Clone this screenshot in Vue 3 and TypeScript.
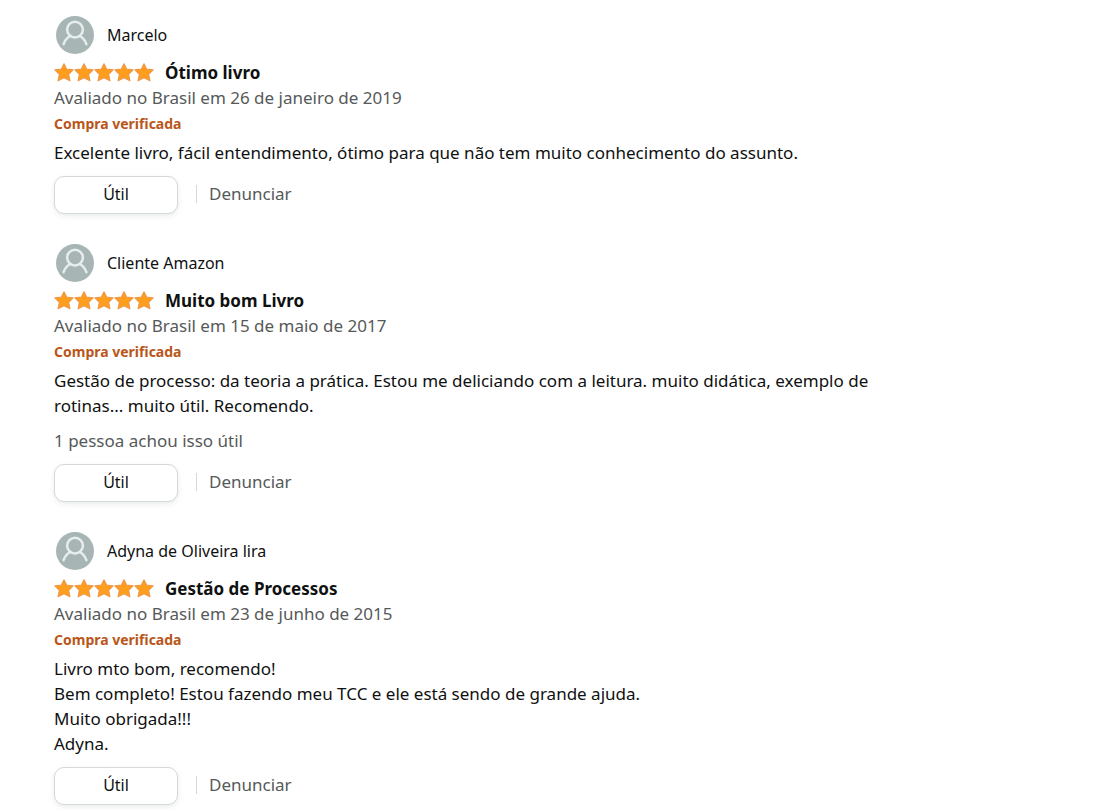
<script setup lang="ts">
interface Review {
  id: number
  author: string
  title: string
  date: string
  body: string[]
  helpful?: string
}

const reviews: Review[] = [
  {
    id: 1,
    author: 'Marcelo',
    title: 'Ótimo livro',
    date: 'Avaliado no Brasil em 26 de janeiro de 2019',
    body: ['Excelente livro, fácil entendimento, ótimo para que não tem muito conhecimento do assunto.'],
  },
  {
    id: 2,
    author: 'Cliente Amazon',
    title: 'Muito bom Livro',
    date: 'Avaliado no Brasil em 15 de maio de 2017',
    body: [
      'Gestão de processo: da teoria a prática. Estou me deliciando com a leitura. muito didática, exemplo de rotinas... muito útil. Recomendo.',
    ],
    helpful: '1 pessoa achou isso útil',
  },
  {
    id: 3,
    author: 'Adyna de Oliveira lira',
    title: 'Gestão de Processos',
    date: 'Avaliado no Brasil em 23 de junho de 2015',
    body: [
      'Livro mto bom, recomendo!',
      'Bem completo! Estou fazendo meu TCC e ele está sendo de grande ajuda.',
      'Muito obrigada!!!',
      'Adyna.',
    ],
  },
]
</script>

<template>
  <main class="reviews">
    <article v-for="review in reviews" :key="review.id" class="review">
      <a class="profile" href="#">
        <svg class="avatar" viewBox="0 0 38 38" aria-hidden="true">
          <circle cx="19" cy="19" r="19" fill="#a8b5b5" />
          <g fill="none" stroke="#e6eded" stroke-width="2.5" stroke-linecap="round">
            <circle cx="19" cy="13.6" r="7.9" />
            <path d="M7.6 28.2C8.8 24.6 11.2 21.6 14.4 20M30.4 28.2C29.2 24.6 26.8 21.6 23.6 20" />
          </g>
        </svg>
        <span class="author">{{ review.author }}</span>
      </a>
      <a class="headline" href="#">
        <span class="stars" role="img" aria-label="5 de 5 estrelas">
          <svg v-for="n in 5" :key="n" class="star" viewBox="0 0 20 20" aria-hidden="true">
            <path
              d="M10 0.8L12.7 6.2L19.1 6.9L14.6 11.4L15.9 17.7L10 14.8L4.1 17.7L5.4 11.4L0.9 6.9L7.3 6.2Z"
              fill="#ff9d1c"
              stroke="#ee9a4a"
              stroke-width="1.2"
              stroke-linejoin="round"
            />
          </svg>
        </span>
        <h3 class="title">{{ review.title }}</h3>
      </a>
      <p class="date">{{ review.date }}</p>
      <a class="badge" href="#">Compra verificada</a>
      <div class="body">
        <p v-for="line in review.body" :key="line">{{ line }}</p>
      </div>
      <p v-if="review.helpful" class="helpful">{{ review.helpful }}</p>
      <div class="actions">
        <button class="vote" type="button">Útil</button>
        <a class="report" href="#">Denunciar</a>
      </div>
    </article>
  </main>
</template>

<style>
body {
  margin: 0;
  background: #fff;
}
</style>

<style scoped>
.reviews {
  display: flex;
  flex-direction: column;
  gap: 29px;
  max-width: 820px;
  padding: 15px 54px 5px;
  color: #0f1111;
  font-family: "Noto Sans", "Open Sans", sans-serif;
  font-size: 17px;
  line-height: 25px;
}

.review {
  display: flex;
  flex-direction: column;
  align-items: flex-start;
}

a {
  color: inherit;
  text-decoration: none;
}

p,
h3 {
  margin: 0;
}

.profile {
  display: flex;
  align-items: center;
  gap: 13px;
  height: 40px;
  padding-left: 2px;
}

.avatar {
  width: 38px;
  height: 38px;
}

.author {
  font-size: 16px;
}

.headline {
  display: flex;
  align-items: center;
  gap: 11px;
  margin-top: 5px;
}

.stars {
  display: flex;
}

.star {
  width: 20px;
  height: 20px;
}

.title {
  font-size: 17px;
  font-weight: 700;
}

.date,
.helpful,
.report {
  color: #565959;
}

.badge {
  margin: 1px 0 4px;
  color: #b9561a;
  font-size: 14px;
  font-weight: 700;
}

.helpful {
  margin-top: 10px;
}

.actions {
  display: flex;
  align-items: center;
  gap: 18px;
  margin-top: 11px;
}

.vote {
  width: 124px;
  height: 38px;
  padding: 0 0 2px;
  border: 1px solid #d5d9d9;
  border-radius: 10px;
  background: #fff;
  box-shadow: 0 2px 5px rgba(213, 217, 217, 0.5);
  color: #0f1111;
  font: inherit;
  font-size: 16px;
}

.report {
  margin-bottom: 2px;
  padding-left: 12px;
  border-left: 1px solid #d5d9d9;
  line-height: 18px;
}
</style>
